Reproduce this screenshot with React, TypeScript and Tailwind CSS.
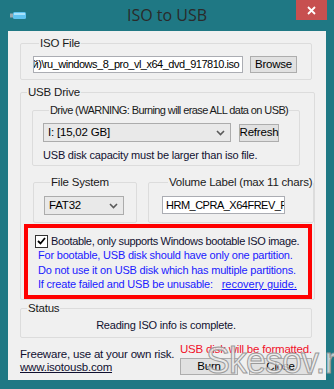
import React from 'react';

const font = "font-['Liberation_Sans','Noto_Sans',sans-serif]";

const Chevron = () => (
    <svg width="9" height="6" viewBox="0 0 9 6" className="shrink-0">
        <path d="M1 1 L4.5 4.5 L8 1" fill="none" stroke="#5a5a5a" strokeWidth="1.6" />
    </svg>
);

const Btn: React.FC<{ label: string; className: string }> = ({ label, className }) => (
    <div className={`flex items-center justify-center bg-[#e1e1e1] border border-[#adadad] text-[11.5px] leading-none text-black whitespace-nowrap ${className}`}>
        {label}
    </div>
);

const Legend: React.FC<{ text: string; className?: string }> = ({ text, className = 'ml-[6px] text-[11.5px] tracking-[-0.2px]' }) => (
    <legend className={`px-[1px] leading-[14px] text-[#1a1a1a] whitespace-nowrap ${className}`}>{text}</legend>
);

const App: React.FC = () => {
    return (
        <div className={`relative w-[334px] h-[389px] overflow-hidden bg-[#1f7884] ${font}`}>
            {/* title bar */}
            <div className="relative h-[31px] flex items-center justify-center">
                <svg width="16" height="7" viewBox="0 0 16 7" className="absolute left-[10px] top-[12px]">
                    <rect x="0" y="1.5" width="3" height="4" fill="#9aa8ae" />
                    <rect x="3" y="0" width="13" height="7" rx="1.5" fill="#5fc3ef" />
                    <rect x="4" y="1" width="11" height="2" fill="#a8e2fb" />
                </svg>
                <span className="text-[16px] text-[#2a2a2a] leading-none -mt-[1px] font-['Open_Sans',sans-serif]">ISO to USB</span>
                <div className="absolute right-[7px] top-0 w-[31px] h-[20px] bg-[#c75050] flex items-center justify-center">
                    <svg width="9" height="9" viewBox="0 0 9 9">
                        <path d="M1 1 L8 8 M8 1 L1 8" stroke="#fff" strokeWidth="1.8" />
                    </svg>
                </div>
            </div>

            {/* client area */}
            <div className="mx-[8px] h-[349px] bg-[#f0f0f0] px-[12px] flex flex-col text-[11px] tracking-[-0.2px] whitespace-nowrap">
                {/* ISO File */}
                <fieldset className="mt-[5px] border border-[#dcdcdc] rounded-[2px] w-[292px] px-[12px] pb-[6px]">
                    <Legend text="ISO File" />
                    <div className="flex items-center gap-[7px] pt-[6px]">
                        <div className="w-[210px] h-[17px] bg-white border border-[#abadb3] flex justify-end items-center overflow-hidden text-[11px] tracking-[-0.5px] text-black pr-[3px]">
                            D:\Образы\Windows 8 (Русский)\ru_windows_8_pro_vl_x64_dvd_917810.iso
                        </div>
                        <Btn label="Browse" className="w-[47px] h-[17px]" />
                    </div>
                </fieldset>

                {/* USB Drive */}
                <fieldset className="mt-[5px] border border-[#dcdcdc] rounded-[2px] w-[292px] pb-0">
                    <Legend text="USB Drive" />
                    <fieldset className="mt-[4px] ml-[11px] w-[267px] border border-[#dcdcdc] rounded-[2px] px-[10px] pb-[3px]">
                        <Legend text="Drive (WARNING: Burning will erase ALL data on USB)" className="ml-[6px] text-[11px] tracking-[-0.6px]" />
                        <div className="flex items-center gap-[8px] pt-[6px]">
                            <div className="w-[188px] h-[19px] bg-[#e9e9e9] border border-[#acacac] flex items-center justify-between pl-[4px] pr-[5px] text-[11.5px] text-black">
                                <span>I: [15,02 GB]</span>
                                <Chevron />
                            </div>
                            <Btn label="Refresh" className="w-[40px] h-[18px]" />
                        </div>
                        <div className="mt-[6px] leading-[14px] text-[#101030]">USB disk capacity must be larger than iso file.</div>
                    </fieldset>

                    <div className="flex mt-[9px] ml-[12px] gap-[11px]">
                        <fieldset className="w-[104px] border border-[#dcdcdc] rounded-[2px] pl-[10px] pb-[7px]">
                            <Legend text="File System" />
                            <div className="mt-[7px] w-[80px] h-[19px] bg-[#e9e9e9] border border-[#acacac] flex items-center justify-between pl-[4px] pr-[5px] text-[11.5px] text-black">
                                <span>FAT32</span>
                                <Chevron />
                            </div>
                        </fieldset>
                        <fieldset className="w-[151px] border border-[#dcdcdc] rounded-[2px] pl-[13px] pb-[7px]">
                            <Legend text="Volume Label (max 11 chars)" />
                            <div className="mt-[7px] w-[123px] h-[18px] bg-white border border-[#abadb3] flex items-center overflow-hidden pl-[3px] text-[11px] tracking-[-0.5px] text-black">
                                HRM_CPRA_X64FREV_RU-RU_DV5
                            </div>
                        </fieldset>
                    </div>

                    {/* bootable (highlighted) */}
                    <div className="mt-[1px] ml-[3px] w-[288px] h-[75px] border-[4px] border-[#ff0000] pt-[6px]">
                        <div className="flex items-center pl-[7px] h-[14px]">
                            <div className="w-[13px] h-[13px] bg-white border border-[#333] flex items-center justify-center">
                                <svg width="9" height="8" viewBox="0 0 9 8">
                                    <path d="M1 4 L3.5 6.5 L8 1" fill="none" stroke="#000" strokeWidth="1.8" />
                                </svg>
                            </div>
                            <span className="ml-[3px] leading-[14px] tracking-[-0.35px] text-[#101030]">Bootable, only supports Windows bootable ISO image.</span>
                        </div>
                        <div className="pl-[10px] leading-[14.5px] text-[#1a1aff]">
                            <div>For bootable, USB disk should have only one partition.</div>
                            <div>Do not use it on USB disk which has multiple partitions.</div>
                            <div>
                                If create failed and USB be unusable: <span className="ml-[6px] underline tracking-[0px]">recovery guide.</span>
                            </div>
                        </div>
                    </div>
                </fieldset>

                {/* Status */}
                <fieldset className="mt-[1px] border border-[#dcdcdc] rounded-[2px] w-[292px] pb-[5px]">
                    <Legend text="Status" />
                    <div className="pt-[3px] text-center leading-[14px] text-[#101030]">Reading ISO info is complete.</div>
                </fieldset>

                {/* footer */}
                <div className="flex justify-between w-[292px]">
                    <div className="pt-[10px] leading-[13px] text-[11.5px] text-[#101030]">
                        <div>Freeware, use at your own risk.</div>
                        <div className="underline">www.isotousb.com</div>
                    </div>
                    <div className="flex flex-col items-end pt-[4px]">
                        <div className="leading-[14px] text-[11.5px] text-[#f0102a]">USB disk will be formatted.</div>
                        <div className="flex gap-[11px] mt-[2px]">
                            <Btn label="Burn" className="w-[58px] h-[17px]" />
                            <Btn label="Close" className="w-[63px] h-[17px]" />
                        </div>
                    </div>
                </div>
            </div>

            {/* watermark */}
            <div className="absolute left-[206px] top-[343px] text-[36px] leading-none font-['Liberation_Sans',sans-serif] text-[#ececec]/80 [-webkit-text-stroke:1px_#9a9a9a] tracking-[-1px] pointer-events-none">
                Skesov.ru
            </div>
        </div>
    );
};

export default App;
